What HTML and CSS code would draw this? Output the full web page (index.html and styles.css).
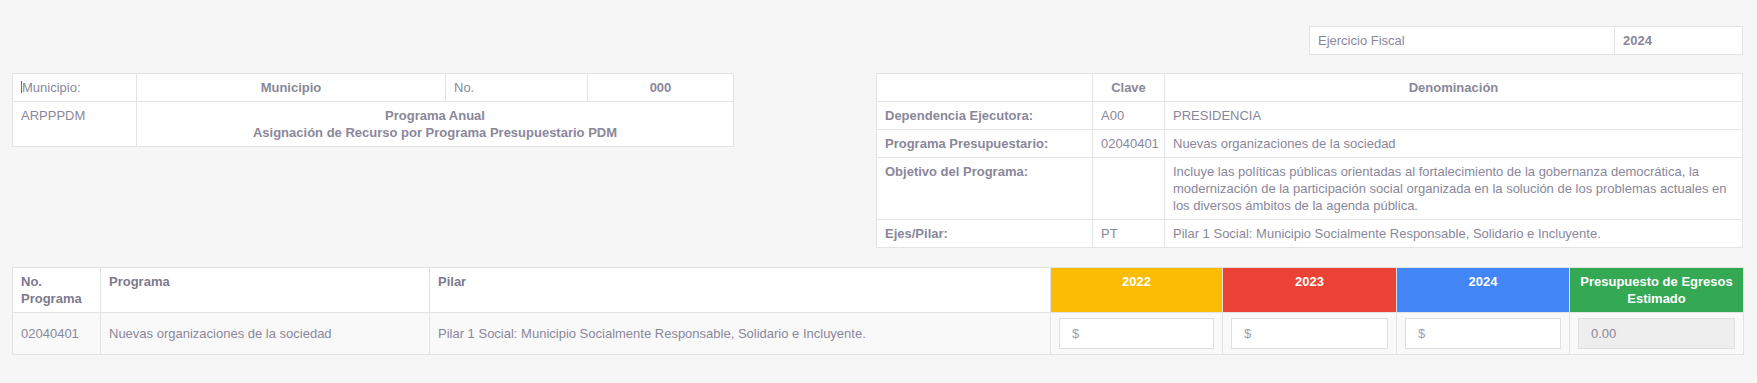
FILE: index.html
```html
<!DOCTYPE html>
<html lang="es">
<head>
<meta charset="utf-8">
<title>Programa Anual PDM</title>
<link rel="stylesheet" href="styles.css">
</head>
<body>
<div class="page">
  <div class="row-top">
    <table class="tbl tbl-fiscal">
      <colgroup><col class="c-fl"><col class="c-fv"></colgroup>
      <tbody>
        <tr><td>Ejercicio Fiscal</td><td class="b">2024</td></tr>
      </tbody>
    </table>
  </div>

  <div class="row-mid">
    <table class="tbl tbl-mun">
      <colgroup><col class="c-m1"><col class="c-m2"><col class="c-m3"><col class="c-m4"></colgroup>
      <tbody>
        <tr>
          <td><span class="caret"></span>Municipio:</td>
          <td class="b center">Municipio</td>
          <td>No.</td>
          <td class="b center">000</td>
        </tr>
        <tr>
          <td>ARPPPDM</td>
          <td colspan="3" class="b center">Programa Anual<br>Asignación de Recurso por Programa Presupuestario PDM</td>
        </tr>
      </tbody>
    </table>

    <table class="tbl tbl-dep">
      <colgroup><col class="c-d1"><col class="c-d2"><col class="c-d3"></colgroup>
      <tbody>
        <tr><td></td><td class="b center">Clave</td><td class="b center">Denominación</td></tr>
        <tr><td class="b">Dependencia Ejecutora:</td><td>A00</td><td>PRESIDENCIA</td></tr>
        <tr><td class="b">Programa Presupuestario:</td><td>02040401</td><td>Nuevas organizaciones de la sociedad</td></tr>
        <tr><td class="b">Objetivo del Programa:</td><td></td><td>Incluye las políticas públicas orientadas al fortalecimiento de la gobernanza democrática, la modernización de la participación social organizada en la solución de los problemas actuales en los diversos ámbitos de la agenda pública.</td></tr>
        <tr><td class="b">Ejes/Pilar:</td><td>PT</td><td>Pilar 1 Social: Municipio Socialmente Responsable, Solidario e Incluyente.</td></tr>
      </tbody>
    </table>
  </div>

  <table class="tbl tbl-prog">
    <colgroup>
      <col class="c-p1"><col class="c-p2"><col class="c-p3">
      <col class="c-p4"><col class="c-p5"><col class="c-p6"><col class="c-p7">
    </colgroup>
    <thead>
      <tr>
        <th>No. Programa</th>
        <th>Programa</th>
        <th>Pilar</th>
        <th class="center yr y2022">2022</th>
        <th class="center yr y2023">2023</th>
        <th class="center yr y2024">2024</th>
        <th class="center yr ytotal">Presupuesto de Egresos Estimado</th>
      </tr>
    </thead>
    <tbody>
      <tr>
        <td>02040401</td>
        <td>Nuevas organizaciones de la sociedad</td>
        <td>Pilar 1 Social: Municipio Socialmente Responsable, Solidario e Incluyente.</td>
        <td><input class="inp" type="text" placeholder="$"></td>
        <td><input class="inp" type="text" placeholder="$"></td>
        <td><input class="inp" type="text" placeholder="$"></td>
        <td><input class="inp inp-ro" type="text" value="0.00" readonly></td>
      </tr>
    </tbody>
  </table>
</div>
</body>
</html>
```

FILE: styles.css
```css
html, body {
  margin: 0;
  padding: 0;
  background: #f6f6f6;
}

body {
  font-family: "Liberation Sans", Arial, sans-serif;
  font-size: 13px;
  line-height: 17px;
  color: #8a879a;
}

.page {
  padding: 26px 14px 0 12px;
}

.row-top {
  display: flex;
  justify-content: flex-end;
}

.row-mid {
  display: flex;
  justify-content: space-between;
  align-items: flex-start;
  margin-top: 18px;
}

.tbl {
  border-collapse: collapse;
  table-layout: fixed;
  background: #fff;
}

.tbl td,
.tbl th {
  border: 1px solid #e3e3e3;
  padding: 5px 8px;
  vertical-align: top;
  text-align: left;
  font-weight: normal;
}

.tbl .b,
.tbl th {
  font-weight: bold;
}

.tbl .center {
  text-align: center;
}

/* Ejercicio fiscal */
.tbl-fiscal { width: 433px; }
.c-fl { width: 305px; }
.c-fv { width: 128px; }

/* Municipio */
.tbl-mun { width: 721px; }
.c-m1 { width: 124px; }
.c-m2 { width: 309px; }
.c-m3 { width: 142px; }
.c-m4 { width: 146px; }

.caret {
  display: inline-block;
  width: 1px;
  height: 12px;
  background: #6c6880;
  vertical-align: -1px;
}

/* Dependencia */
.tbl-dep { width: 866px; }
.c-d1 { width: 216px; }
.c-d2 { width: 72px; }
.c-d3 { width: 578px; }

/* Programas */
.tbl-prog {
  width: 1731px;
  margin-top: 19px;
}
.c-p1 { width: 88px; }
.c-p2 { width: 329px; }
.c-p3 { width: 621px; }
.c-p4 { width: 172px; }
.c-p5 { width: 174px; }
.c-p6 { width: 173px; }
.c-p7 { width: 174px; }

.tbl-prog thead th {
  color: #7d7a8e;
}

.tbl-prog tbody td {
  background: #f9f9f9;
  vertical-align: middle;
}

.tbl-prog th.yr {
  color: #fff;
  text-align: center;
}
.y2022 { background: #fbbc05; border-color: #fbbc05; }
.y2023 { background: #ea4335; }
.y2024 { background: #4285f4; }
.ytotal { background: #34a853; }

.inp {
  display: block;
  box-sizing: border-box;
  width: 100%;
  height: 31px;
  margin: 0;
  padding: 6px 12px;
  border: 1px solid #e0e0e0;
  border-radius: 0;
  background: #fff;
  font-family: inherit;
  font-size: 13px;
  color: #8a879a;
  outline: none;
}

.inp::placeholder {
  color: #a09cad;
}

.inp-ro {
  background: #eeeeee;
}
```
